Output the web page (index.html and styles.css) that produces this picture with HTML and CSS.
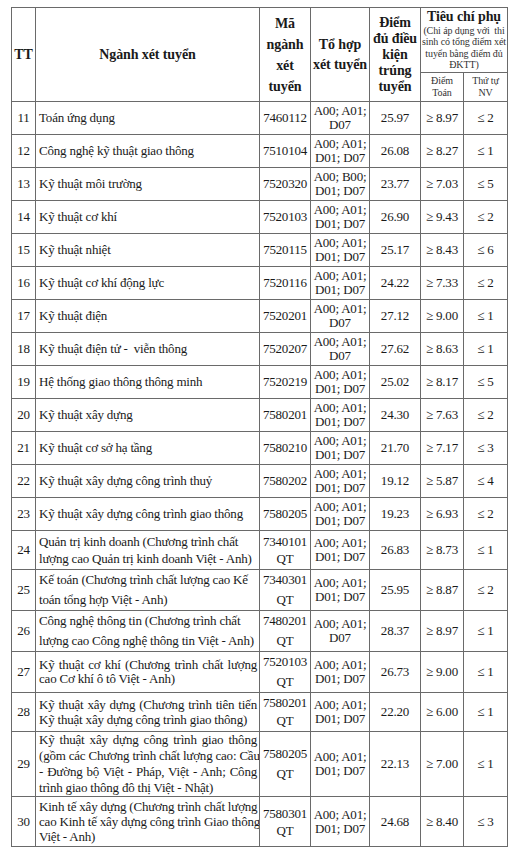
FILE: index.html
```html
<!DOCTYPE html>
<html lang="vi">
<head>
<meta charset="utf-8">
<title>Điểm chuẩn</title>
<link rel="stylesheet" href="styles.css">
</head>
<body>
<table class="tbl">
  <colgroup>
    <col class="c-tt"><col class="c-name"><col class="c-ma"><col class="c-th"><col class="c-d"><col class="c-dt"><col class="c-nv">
  </colgroup>
  <thead>
    <tr class="h1">
      <th rowspan="2">TT</th>
      <th rowspan="2">Ngành xét tuyển</th>
      <th rowspan="2" class="hma">Mã<br>ngành<br>xét<br>tuyển</th>
      <th rowspan="2" class="hth">Tổ hợp<br>xét tuyển</th>
      <th rowspan="2" class="hd">Điểm<br>đủ điều<br>kiện<br>trúng<br>tuyển</th>
      <th colspan="2" class="htc"><div class="tc-title">Tiêu chí phụ</div><div class="tc-sub">(Chi áp dụng với&nbsp; thi<br>sinh có tổng điểm xét<br>tuyển bằng điểm đủ<br>ĐKTT)</div></th>
    </tr>
    <tr class="h2">
      <th class="hs">Điểm<br>Toán</th>
      <th class="hs">Thứ tự<br>NV</th>
    </tr>
  </thead>
  <tbody>
    <tr class="r1"><td class="tt">11</td><td class="nm">Toán ứng dụng</td><td class="ma">7460112</td><td class="th">A00; A01;<br>D07</td><td class="ct">25.97</td><td class="ct">≥ 8.97</td><td class="ct">≤ 2</td></tr>
    <tr class="r1"><td class="tt">12</td><td class="nm">Công nghệ kỹ thuật giao thông</td><td class="ma">7510104</td><td class="th">A00; A01;<br>D01; D07</td><td class="ct">26.08</td><td class="ct">≥ 8.27</td><td class="ct">≤ 1</td></tr>
    <tr class="r1"><td class="tt">13</td><td class="nm">Kỹ thuật môi trường</td><td class="ma">7520320</td><td class="th">A00; B00;<br>D01; D07</td><td class="ct">23.77</td><td class="ct">≥ 7.03</td><td class="ct">≤ 5</td></tr>
    <tr class="r1"><td class="tt">14</td><td class="nm">Kỹ thuật cơ khí</td><td class="ma">7520103</td><td class="th">A00; A01;<br>D01; D07</td><td class="ct">26.90</td><td class="ct">≥ 9.43</td><td class="ct">≤ 2</td></tr>
    <tr class="r1"><td class="tt">15</td><td class="nm">Kỹ thuật nhiệt</td><td class="ma">7520115</td><td class="th">A00; A01;<br>D01; D07</td><td class="ct">25.17</td><td class="ct">≥ 8.43</td><td class="ct">≤ 6</td></tr>
    <tr class="r1"><td class="tt">16</td><td class="nm">Kỹ thuật cơ khí động lực</td><td class="ma">7520116</td><td class="th">A00; A01;<br>D01; D07</td><td class="ct">24.22</td><td class="ct">≥ 7.33</td><td class="ct">≤ 2</td></tr>
    <tr class="r1"><td class="tt">17</td><td class="nm">Kỹ thuật điện</td><td class="ma">7520201</td><td class="th">A00; A01;<br>D07</td><td class="ct">27.12</td><td class="ct">≥ 9.00</td><td class="ct">≤ 1</td></tr>
    <tr class="r1"><td class="tt">18</td><td class="nm">Kỹ thuật điện tử -&nbsp; viễn thông</td><td class="ma">7520207</td><td class="th">A00; A01;<br>D07</td><td class="ct">27.62</td><td class="ct">≥ 8.63</td><td class="ct">≤ 1</td></tr>
    <tr class="r1"><td class="tt">19</td><td class="nm">Hệ thống giao thông thông minh</td><td class="ma">7520219</td><td class="th">A00; A01;<br>D01; D07</td><td class="ct">25.02</td><td class="ct">≥ 8.17</td><td class="ct">≤ 5</td></tr>
    <tr class="r1"><td class="tt">20</td><td class="nm">Kỹ thuật xây dựng</td><td class="ma">7580201</td><td class="th">A00; A01;<br>D01; D07</td><td class="ct">24.30</td><td class="ct">≥ 7.63</td><td class="ct">≤ 2</td></tr>
    <tr class="r1"><td class="tt">21</td><td class="nm">Kỹ thuật cơ sở hạ tầng</td><td class="ma">7580210</td><td class="th">A00; A01;<br>D01; D07</td><td class="ct">21.70</td><td class="ct">≥ 7.17</td><td class="ct">≤ 3</td></tr>
    <tr class="r1"><td class="tt">22</td><td class="nm">Kỹ thuật xây dựng công trình thuỷ</td><td class="ma">7580202</td><td class="th">A00; A01;<br>D01; D07</td><td class="ct">19.12</td><td class="ct">≥ 5.87</td><td class="ct">≤ 4</td></tr>
    <tr class="r1"><td class="tt">23</td><td class="nm">Kỹ thuật xây dựng công trình giao thông</td><td class="ma">7580205</td><td class="th">A00; A01;<br>D01; D07</td><td class="ct">19.23</td><td class="ct">≥ 6.93</td><td class="ct">≤ 2</td></tr>
    <tr class="r2"><td class="tt">24</td><td class="nm l17">Quản trị kinh doanh (Chương trình chất<br>lượng cao Quản trị kinh doanh Việt - Anh)</td><td class="ma l17">7340101<br>QT</td><td class="th">A00; A01;<br>D01; D07</td><td class="ct">26.83</td><td class="ct">≥ 8.73</td><td class="ct">≤ 1</td></tr>
    <tr class="r3"><td class="tt">25</td><td class="nm l20">Kế toán (Chương trình chất lượng cao Kế<br>toán tổng hợp Việt - Anh)</td><td class="ma l20">7340301<br>QT</td><td class="th">A00; A01;<br>D01; D07</td><td class="ct">25.95</td><td class="ct">≥ 8.87</td><td class="ct">≤ 2</td></tr>
    <tr class="r2"><td class="tt">26</td><td class="nm l20">Công nghệ thông tin (Chương trình chất<br>lượng cao Công nghệ thông tin Việt - Anh)</td><td class="ma l20">7480201<br>QT</td><td class="th">A00; A01;<br>D07</td><td class="ct">28.37</td><td class="ct">≥ 8.97</td><td class="ct">≤ 1</td></tr>
    <tr class="r3"><td class="tt">27</td><td class="nm l14"><span class="jl">Kỹ thuật cơ khí (Chương trình chất lượng</span>cao Cơ khí ô tô Việt - Anh)</td><td class="ma l20">7520103<br>QT</td><td class="th">A00; A01;<br>D01; D07</td><td class="ct">26.73</td><td class="ct">≥ 9.00</td><td class="ct">≤ 1</td></tr>
    <tr class="r2"><td class="tt">28</td><td class="nm l15"><span class="jl">Kỹ thuật xây dựng (Chương trình tiên tiến</span>Kỹ thuật xây dựng công trình giao thông)</td><td class="ma l18">7580201<br>QT</td><td class="th">A00; A01;<br>D01; D07</td><td class="ct">22.20</td><td class="ct">≥ 6.00</td><td class="ct">≤ 1</td></tr>
    <tr class="r4"><td class="tt">29</td><td class="nm l16"><span class="jl">Kỹ thuật xây dựng công trình giao thông</span><span class="jl">(gồm các Chương trình chất lượng cao: Cầu</span><span class="jl">- Đường bộ Việt - Pháp, Việt - Anh; Công</span>trình giao thông đô thị Việt - Nhật)</td><td class="ma l20">7580205<br>QT</td><td class="th">A00; A01;<br>D01; D07</td><td class="ct">22.13</td><td class="ct">≥ 7.00</td><td class="ct">≤ 1</td></tr>
    <tr class="r5"><td class="tt">30</td><td class="nm l15"><span class="jl">Kinh tế xây dựng (Chương trình chất lượng</span><span class="jl">cao Kinh tế xây dựng công trình Giao thông</span>Việt - Anh)</td><td class="ma l17">7580301<br>QT</td><td class="th">A00; A01;<br>D01; D07</td><td class="ct">24.68</td><td class="ct">≥ 8.40</td><td class="ct">≤ 3</td></tr>
  </tbody>
</table>
</body>
</html>
```
FILE: styles.css
```css
html, body {
  margin: 0;
  padding: 0;
  background: #ffffff;
}
body {
  padding: 7px 10px 0 11px;
  font-family: "Liberation Serif", "Times New Roman", serif;
  color: #1a1a1a;
}
.tbl {
  border-collapse: collapse;
  table-layout: fixed;
  width: 497px;
  font-size: 13px;
  letter-spacing: -0.2px;
}
.c-tt { width: 24px; }
.c-name { width: 224px; }
.c-ma { width: 51px; }
.c-th { width: 59px; }
.c-d { width: 51px; }
.c-dt { width: 43px; }
.c-nv { width: 44px; }

.tbl th, .tbl td {
  border: 1px solid #6a6a6a;
  padding: 0 2px;
  vertical-align: middle;
  text-align: center;
  overflow: hidden;
  white-space: nowrap;
}
.tbl th {
  font-weight: bold;
  font-size: 14px;
  letter-spacing: -0.1px;
  line-height: 18px;
  padding: 0;
}
.h1 { height: 65px; }
.h2 { height: 29px; }
.tbl th.hma { line-height: 21px; }
.tbl th.hth { line-height: 20px; }
.tbl th.hd { line-height: 16px; }
.tc-title {
  font-size: 14px;
  line-height: 16px;
}
.tc-sub {
  font-size: 10px;
  font-weight: normal;
  line-height: 11.5px;
  letter-spacing: -0.1px;
  color: #333;
  padding-bottom: 1px;
}
.tbl th.hs {
  font-size: 10px;
  font-weight: normal;
  line-height: 12.5px;
  color: #333;
}

.r1 { height: 33px; }
.r2 { height: 39px; }
.r3 { height: 40px; }
.r4 { height: 65px; }
.r5 { height: 50px; }

.tbl td.tt { padding: 0; }
.tbl td.nm {
  text-align: left;
  padding-left: 3px;
  padding-right: 2px;
}
.jl {
  display: block;
  text-align: justify;
  text-align-last: justify;
}
.tbl td.l14 { line-height: 14px; }
.tbl td.l15 { line-height: 15px; }
.tbl td.l16 { line-height: 16px; }
.tbl td.l17 { line-height: 17px; }
.tbl td.l18 { line-height: 18px; }
.tbl td.l20 { line-height: 20px; }
.tbl td.ma { padding: 0 1px; }
.tbl td.th {
  line-height: 14px;
  padding: 0;
}
```
